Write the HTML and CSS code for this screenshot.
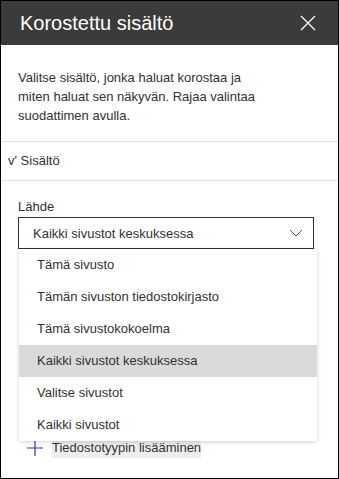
FILE: index.html
```html
<!DOCTYPE html>
<html lang="fi">
<head>
  <meta charset="UTF-8">
  <meta name="viewport" content="width=device-width, initial-scale=1.0">
  <title>Korostettu sisältö</title>
  <link rel="stylesheet" href="styles.css">
</head>
<body>
  <div class="panel">
    <!-- Header -->
    <div class="panel-header">
      <h1 class="panel-title">Korostettu sisältö</h1>
      <button class="close-button" aria-label="Sulje">
        <svg width="16" height="16" viewBox="0 0 16 16">
          <path d="M1 1 L15 15 M15 1 L1 15" stroke="#ffffff" stroke-width="1.3" fill="none"/>
        </svg>
      </button>
    </div>

    <div class="panel-intro">
      <p>Valitse sisältö, jonka haluat korostaa ja miten haluat sen näkyvän. Rajaa valintaa suodattimen avulla.</p>
    </div>

    <div class="section-toggle">v' Sisältö</div>

    <div class="section-body">
      <label class="field-label">Lähde</label>
      <div class="dropdown">
        <div class="dropdown-box">
          <span>Kaikki sivustot keskuksessa</span>
          <svg width="14" height="8" viewBox="0 0 14 8">
            <path d="M1 1 L7 7 L13 1" stroke="#605e5c" stroke-width="1" fill="none"/>
          </svg>
        </div>
        <ul class="dropdown-list">
          <li>Tämä sivusto</li>
          <li>Tämän sivuston tiedostokirjasto</li>
          <li>Tämä sivustokokoelma</li>
          <li class="selected">Kaikki sivustot keskuksessa</li>
          <li>Valitse sivustot</li>
          <li>Kaikki sivustot</li>
        </ul>
      </div>

      <div class="add-row">
        <svg width="16" height="16" viewBox="0 0 16 16">
          <path d="M8 0 V16 M0 8 H16" stroke="#2f3f8f" stroke-width="1.2" fill="none"/>
        </svg>
        <span class="add-label">Tiedostotyypin lisääminen</span>
      </div>
    </div>
  </div>
</body>
</html>
```

FILE: styles.css
```css
body {
  margin: 0;
  padding: 0;
  font-family: 'Liberation Sans', Arial, sans-serif;
  color: #323130;
  background: #ffffff;
}

.panel {
  width: 339px;
  height: 479px;
  box-sizing: border-box;
  border: 1px solid #000000;
  overflow: hidden;
}

.panel-header {
  display: flex;
  align-items: center;
  justify-content: space-between;
  height: 44px;
  padding: 0 22px 0 19px;
  background-color: #3b3b3b;
}

.panel-title {
  margin: 0;
  font-size: 20px;
  font-weight: normal;
  color: #ffffff;
}

.close-button {
  display: flex;
  padding: 0;
  border: none;
  background: none;
  cursor: pointer;
}

.panel-intro {
  padding: 23px 0 16px 17px;
  border-bottom: 1px solid #e1dfdd;
}

.panel-intro p {
  width: 245px;
  margin: 0;
  font-size: 13px;
  line-height: 19px;
}

.section-toggle {
  height: 38px;
  line-height: 38px;
  padding-left: 7px;
  font-size: 13px;
  border-bottom: 1px solid #e1dfdd;
}

.section-body {
  padding: 18px 0 0 17px;
}

.field-label {
  display: block;
  font-size: 13px;
  line-height: 16px;
  margin-bottom: 2px;
}

.dropdown {
  position: relative;
  width: 296px;
}

.dropdown-box {
  display: flex;
  align-items: center;
  justify-content: space-between;
  height: 30px;
  padding: 0 10px 0 14px;
  border: 1px solid #323130;
  font-size: 13px;
}

.dropdown-list {
  position: absolute;
  top: 32px;
  left: 1px;
  width: 298px;
  margin: 0;
  padding: 0;
  list-style: none;
  background: #ffffff;
  box-shadow: 0 1px 4px rgba(0, 0, 0, 0.18);
  z-index: 1;
}

.dropdown-list li {
  height: 32px;
  line-height: 32px;
  padding-left: 18px;
  font-size: 13px;
}

.dropdown-list li.selected {
  background-color: #dadada;
}

.add-row {
  display: flex;
  align-items: center;
  gap: 9px;
  margin-top: 188px;
  padding-left: 9px;
}

.add-label {
  font-size: 13px;
  line-height: 21px;
  background-color: #ededed;
}
```
